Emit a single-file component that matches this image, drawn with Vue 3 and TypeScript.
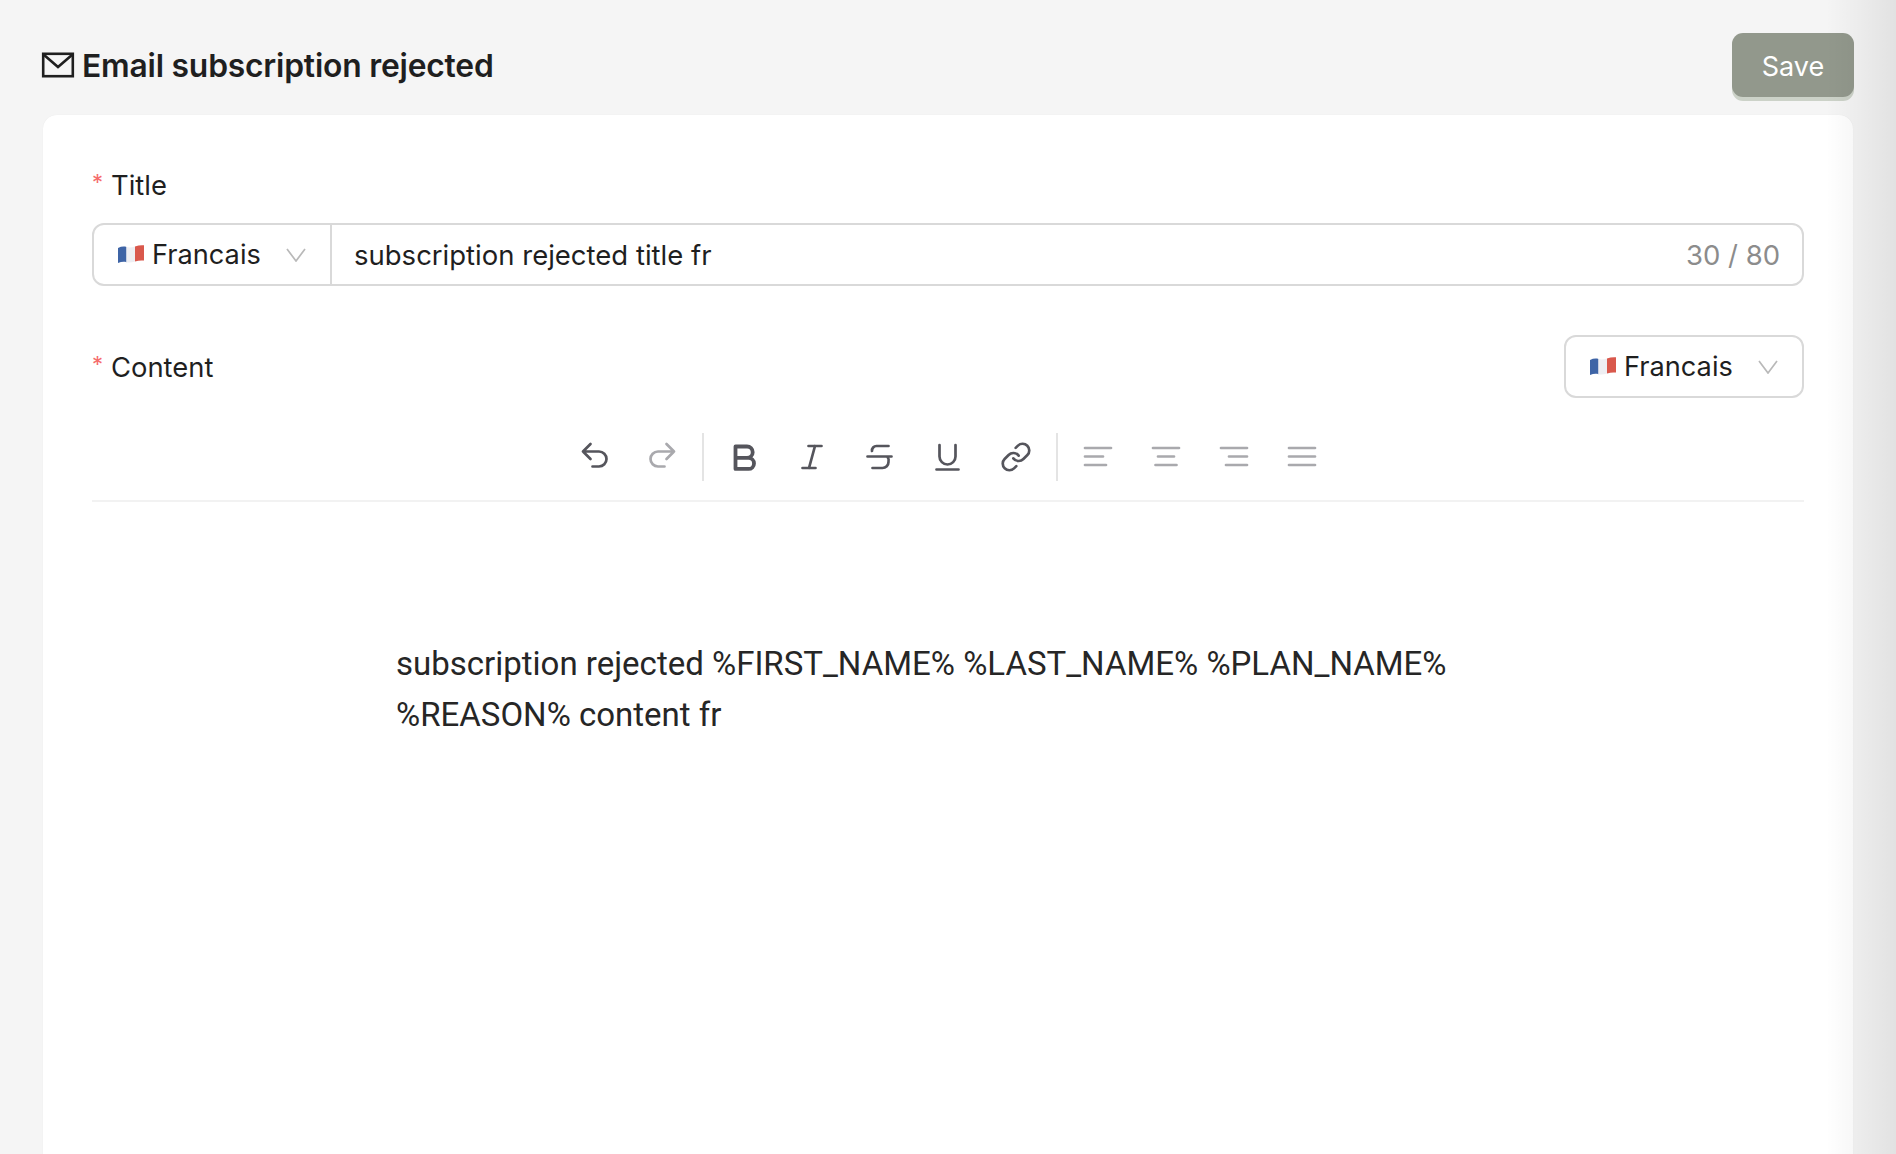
<template>
  <div class="page">
    <header class="page-head">
      <h1 class="page-title">
        <svg class="mail-icon" width="34" height="26" viewBox="0 0 34 26" fill="none" stroke="#1f1f1f" stroke-width="2.6">
          <rect x="2.2" y="1.8" width="29.6" height="22.4" />
          <path d="M2.5 2.5 17 15 31.5 2.5" />
        </svg>
        Email subscription rejected
      </h1>
      <button class="save-btn">Save</button>
    </header>

    <main class="card">
      <div class="field-label title-label"><span class="req">*</span>Title</div>
      <div class="input-group">
        <div class="lang-select in-group">
          <svg class="flag" width="26" height="18" viewBox="0 0 26 18">
            <path d="M0 3 C3 1.500 6 1.200 8.500 2 V17.200 C6 16.500 3 16.800 0 18 Z" fill="#3e64a6" />
            <path d="M8.500 2 C11 2.800 14 2.600 17 1.500 V16.500 C14 17.500 11 17.900 8.500 17.200 Z" fill="#eeeef2" />
            <path d="M17 1.500 C20 .4 23 0 26 .3 V15.600 C23 15.300 20 15.500 17 16.500 Z" fill="#d9584c" />
          </svg>
          <span>Francais</span>
          <svg class="chevron" width="20" height="14" viewBox="0 0 20 14" fill="none" stroke="#b9b9b9" stroke-width="1.7">
            <path d="M1 1 10 13 19 1" />
          </svg>
        </div>
        <div class="input-text">subscription rejected title fr</div>
        <div class="input-count">30 / 80</div>
      </div>

      <div class="content-row">
        <div class="field-label"><span class="req">*</span>Content</div>
        <div class="lang-select boxed">
          <svg class="flag" width="26" height="18" viewBox="0 0 26 18">
            <path d="M0 3 C3 1.500 6 1.200 8.500 2 V17.200 C6 16.500 3 16.800 0 18 Z" fill="#3e64a6" />
            <path d="M8.500 2 C11 2.800 14 2.600 17 1.500 V16.500 C14 17.500 11 17.900 8.500 17.200 Z" fill="#eeeef2" />
            <path d="M17 1.500 C20 .4 23 0 26 .3 V15.600 C23 15.300 20 15.500 17 16.500 Z" fill="#d9584c" />
          </svg>
          <span>Francais</span>
          <svg class="chevron" width="20" height="14" viewBox="0 0 20 14" fill="none" stroke="#b9b9b9" stroke-width="1.7">
            <path d="M1 1 10 13 19 1" />
          </svg>
        </div>
      </div>

      <div class="toolbar">
        <template v-for="(tool, i) in tools" :key="i">
          <span v-if="tool === null" class="tool-sep"></span>
          <span v-else class="tool" :class="{ muted: tool.muted }">
            <svg width="32" height="32" :viewBox="tool.box || '0 0 32 32'" fill="none" stroke="currentColor" :stroke-width="tool.sw" stroke-linecap="round" stroke-linejoin="round">
              <path :d="tool.d" />
            </svg>
          </span>
        </template>
      </div>

      <div class="editor">
        <p>subscription rejected %FIRST_NAME% %LAST_NAME% %PLAN_NAME%</p>
        <p>%REASON% content fr</p>
      </div>
    </main>

    <div class="edge-shade"></div>
  </div>
</template>

<script setup lang="ts">
interface Tool {
  d: string
  sw: number
  muted?: boolean
  box?: string
}

// null = separator
const tools: (Tool | null)[] = [
  { d: 'M11.500 3 4 10.500 11.500 18M4 10.500H20a7.500 7.500 0 0 1 0 15H13.500', sw: 2.7 },
  { d: 'M20.500 3 28 10.500 20.500 18M28 10.500H12a7.500 7.500 0 0 0 0 15H18.500', sw: 2.7, muted: true },
  null,
  { d: 'M7.500 5.500H19a5.700 5.700 0 0 1 0 11.400H7.500ZM7.500 16.900H20.500a5.500 5.500 0 0 1 0 11H7.500Z', sw: 3.8 },
  { d: 'M12.500 5H25.500M6.500 27H19.500M19 5 13 27', sw: 2.7 },
  { d: 'M24.500 5H12.500a4.500 4.500 0 0 0-4.500 5M3.500 15.500H27.500M23.500 16a5.500 5.500 0 0 1 1 5 6 6 0 0 1-6 6H8.500', sw: 2.7 },
  { d: 'M7.500 4V15.500a8 8 0 0 0 16 0V4M4.500 28.500H26.500', sw: 2.7 },
  {
    d: 'M10 13a5 5 0 0 0 7.540.540l3-3a5 5 0 0 0-7.070-7.070l-1.720 1.710M14 11a5 5 0 0 0-7.540-.540l-3 3a5 5 0 0 0 7.070 7.070l1.710-1.710',
    sw: 2,
    box: '0 0 24 24'
  },
  null,
  { d: 'M3 7H29M3 15.500H21M3 24H24', sw: 2.7, muted: true },
  { d: 'M3 7H29M8 15.500H24M5.500 24H26.500', sw: 2.7, muted: true },
  { d: 'M3 7H29M11 15.500H29M8 24H29', sw: 2.7, muted: true },
  { d: 'M4 7H30M4 15.500H30M4 24H30', sw: 2.7, muted: true }
]
</script>

<style>
html,
body {
  margin: 0;
  background: #f5f5f5;
  overflow: hidden;
}
</style>

<style scoped>
.page {
  position: relative;
  height: 1154px;
  overflow: hidden;
  padding: 33px 42px 0;
  box-sizing: border-box;
  background: #f5f5f5;
  font-family: Inter, "Liberation Sans", sans-serif;
  color: #1f1f1f;
}

.page-head {
  display: flex;
  align-items: flex-start;
  justify-content: space-between;
  height: 82px;
}

.page-title {
  display: flex;
  align-items: center;
  gap: 7px;
  height: 64px;
  margin: 0 0 0 -1px;
  font-size: 31.800px;
  font-weight: 600;
  letter-spacing: -0.2px;
}

.mail-icon {
  flex: none;
}

.save-btn {
  width: 122px;
  height: 64px;
  padding-top: 3px;
  border: none;
  border-radius: 11px;
  background: #92988c;
  box-shadow: 0 4px 0 #ccd2c8;
  color: #fff;
  font-family: inherit;
  font-size: 27px;
}

.card {
  margin: 0 1px;
  height: 1100px;
  padding: 0 49px;
  background: #fff;
  border-radius: 14px;
  box-shadow: 0 0 1px rgba(0, 0, 0, 0.08);
}

.field-label {
  display: flex;
  align-items: center;
  font-size: 27.400px;
  line-height: 34px;
}

.title-label {
  padding-top: 53px;
  margin-bottom: 21px;
}

.req {
  width: 19px;
  color: #f56c6c;
  font-size: 22px;
  position: relative;
  top: -3px;
}

.input-group {
  display: flex;
  align-items: center;
  height: 63px;
  box-sizing: border-box;
  border: 2px solid #d9d9d9;
  border-radius: 12px;
  font-size: 27.500px;
}

.lang-select {
  display: flex;
  align-items: center;
  font-size: 27.200px;
}

.lang-select .flag {
  flex: none;
  margin-right: 8px;
  position: relative;
  top: -1px;
}

.lang-select .chevron {
  flex: none;
  margin-left: auto;
}

.in-group {
  width: 238px;
  height: 100%;
  box-sizing: border-box;
  padding: 0 24px;
  border-right: 2px solid #d9d9d9;
}

.input-text {
  flex: 1;
  padding-left: 22px;
}

.input-count {
  padding-right: 22px;
  color: #8c8c8c;
}

.content-row {
  display: flex;
  align-items: center;
  justify-content: space-between;
  margin-top: 49px;
}

.boxed {
  width: 240px;
  height: 63px;
  box-sizing: border-box;
  padding: 0 24px 0 24px;
  border: 2px solid #d9d9d9;
  border-radius: 12px;
}

.toolbar {
  display: flex;
  align-items: center;
  justify-content: center;
  height: 86px;
  padding-top: 16px;
  border-bottom: 2px solid #f2f2f2;
}

.tool {
  display: flex;
  justify-content: center;
  width: 67.900px;
  color: #55555c;
}

.tool.muted {
  color: #a9a9ad;
}

.tool-sep {
  width: 2px;
  height: 48px;
  margin: 0 6px;
  background: #e4e4e4;
}

.editor {
  padding: 136px 0 0 304px;
  font-family: Roboto, Inter, sans-serif;
  font-size: 33px;
  line-height: 51px;
  color: #262626;
}

.editor p {
  margin: 0;
}

.edge-shade {
  position: absolute;
  top: 0;
  right: 0;
  bottom: 0;
  width: 70px;
  background: linear-gradient(to right, rgba(0, 0, 0, 0), rgba(0, 0, 0, 0.08));
  pointer-events: none;
}
</style>
